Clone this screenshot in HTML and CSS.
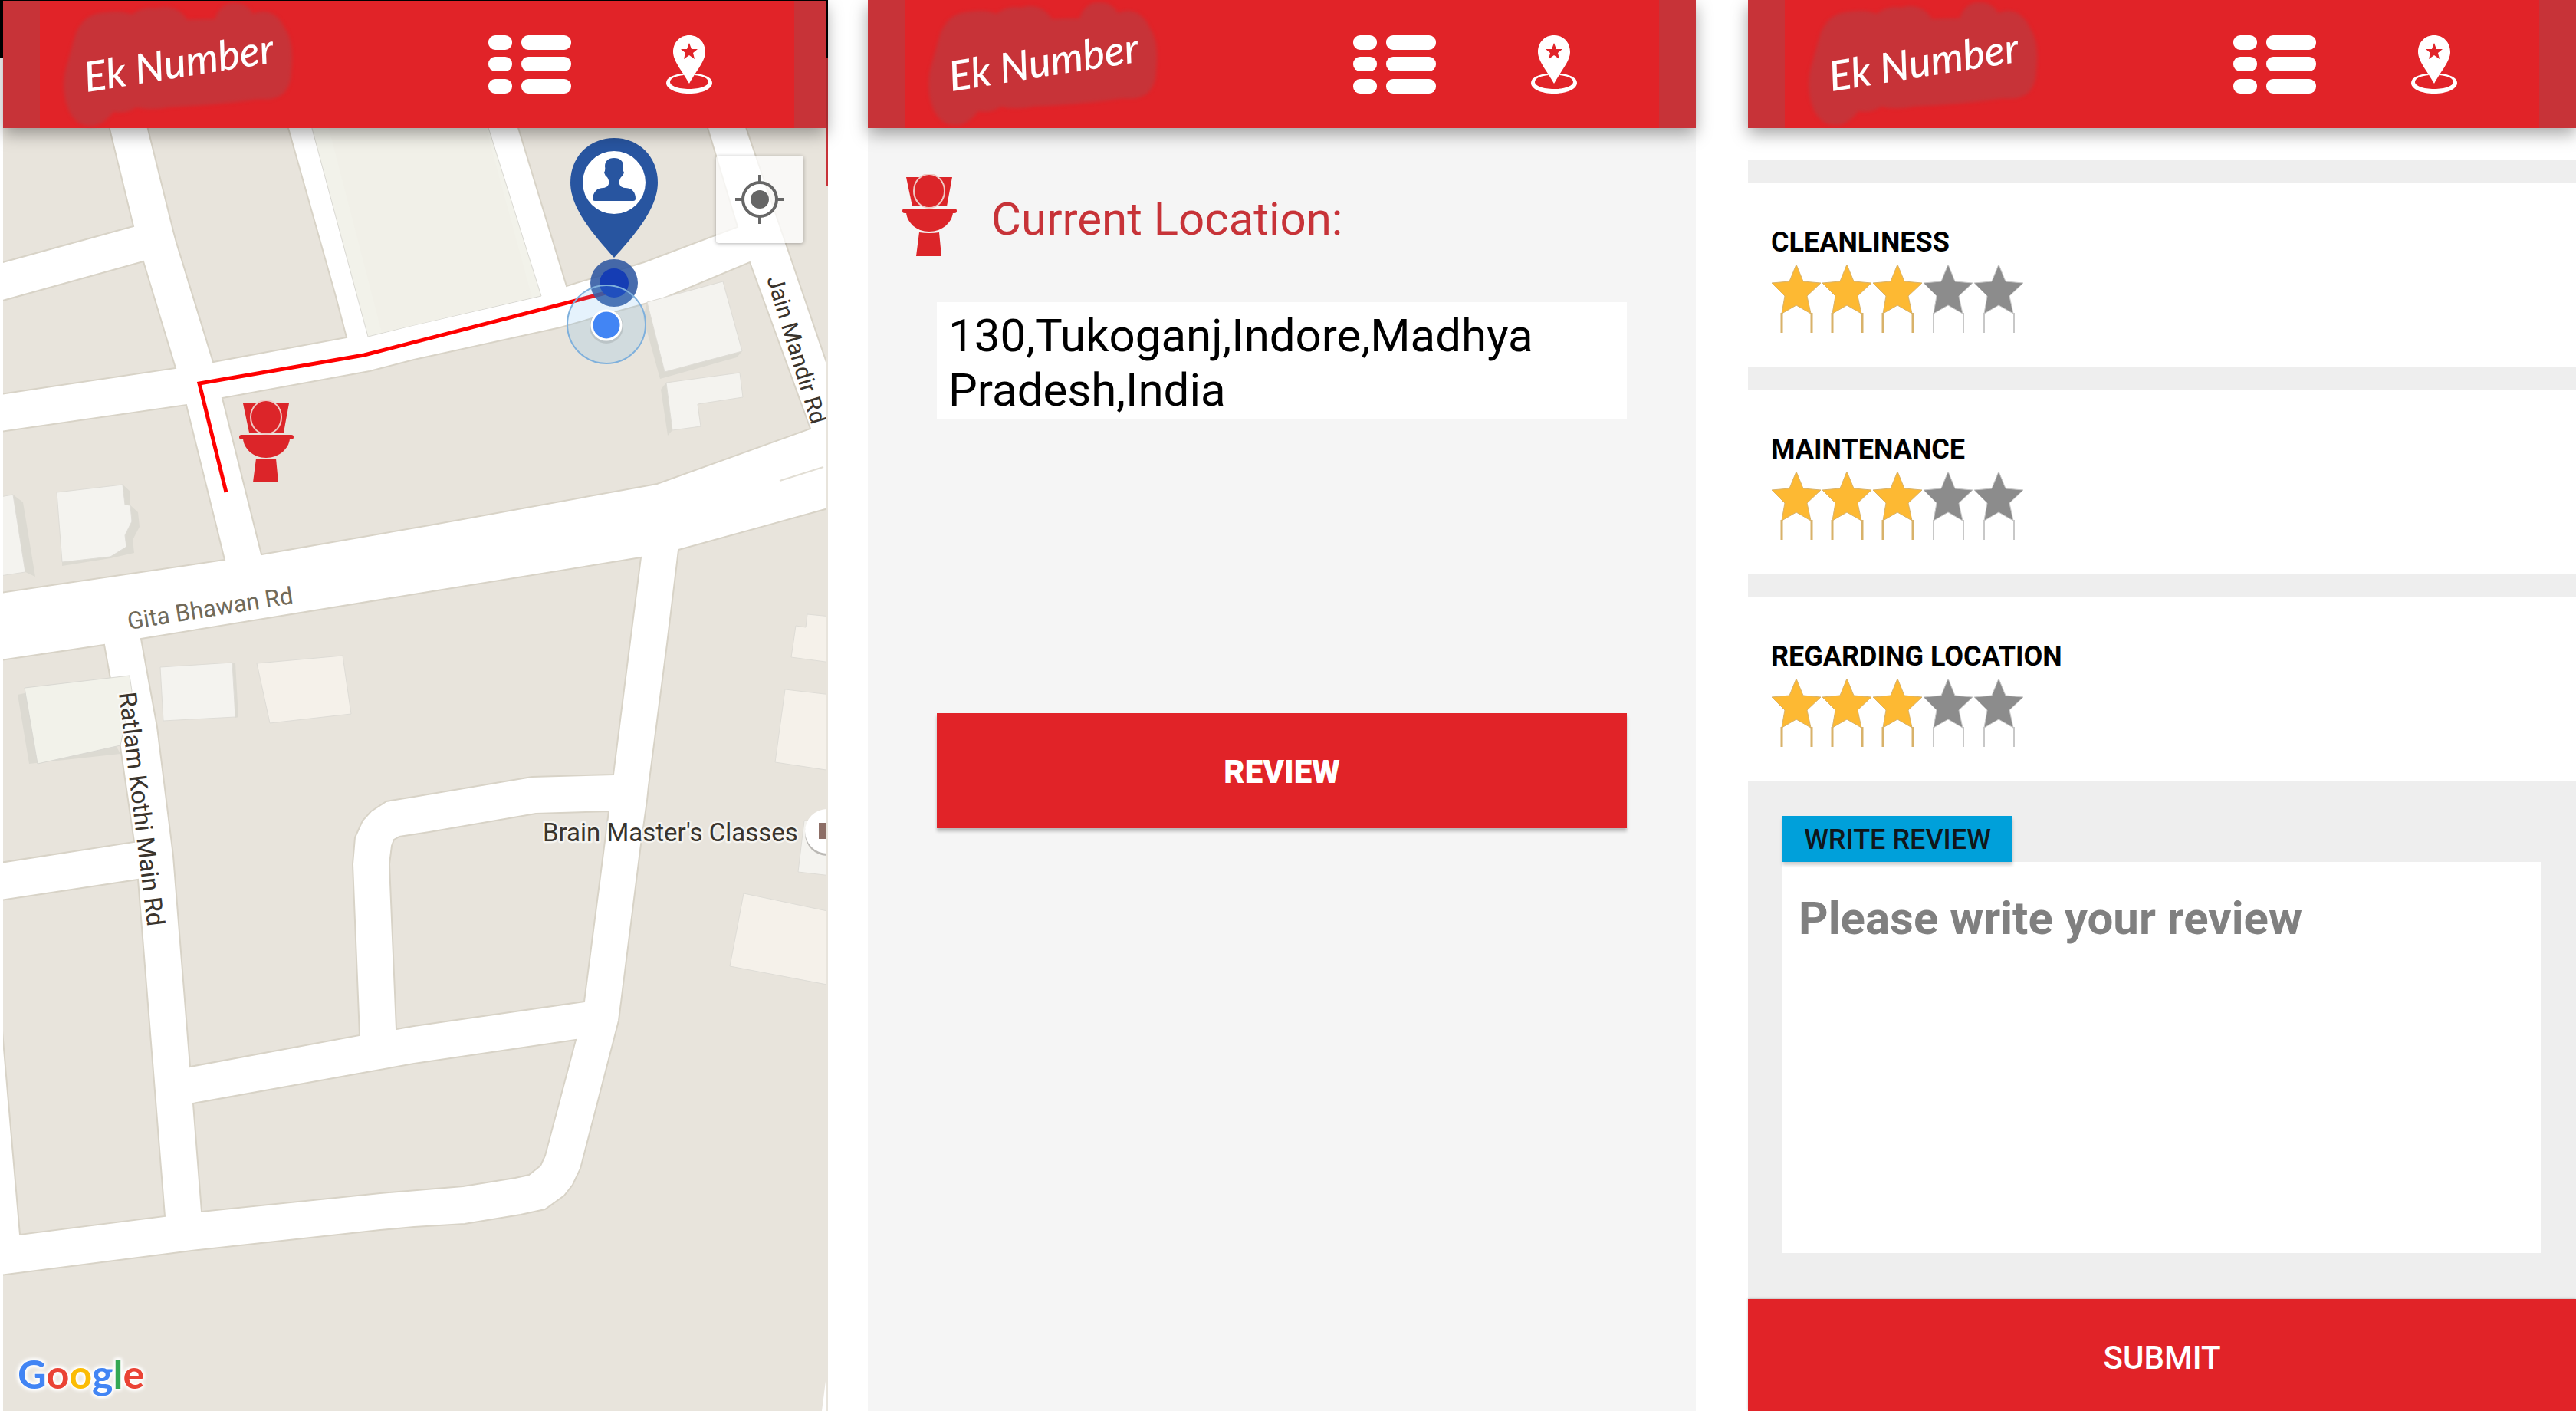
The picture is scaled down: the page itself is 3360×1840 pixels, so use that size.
FILE: index.html
```html
<!DOCTYPE html>
<html lang="en">
<head>
<meta charset="utf-8">
<meta name="viewport" content="width=device-width, initial-scale=1">
<title>Ek Number</title>
<link rel="stylesheet" href="styles.css">
</head>
<body>
<svg class="defs" aria-hidden="true">
  <symbol id="blob" viewBox="0 0 340 180">
    <path d="M38 45C45 28 55 16 78 15Q98 12 112 18C122 10 134 8 144 10C160 4 178 12 184 25Q202 24 220 24C225 8 236 2 247 3C260 3 268 12 270 17C290 8 305 20 312 37C322 50 322 75 320 92C320 110 312 124 298 127C290 130 280 128 272 129C245 133 200 137 160 139Q135 144 118 139Q105 148 88 145C80 156 68 165 56 163C40 163 30 148 27 135C22 122 22 100 26 88Z"/>
  </symbol>
  <symbol id="list" viewBox="0 0 108 76">
    <rect width="31" height="19" rx="9"/><rect x="43" width="65" height="19" rx="9"/>
    <rect y="28" width="31" height="19" rx="9"/><rect x="43" y="28" width="65" height="19" rx="9"/>
    <rect y="57" width="31" height="19" rx="9"/><rect x="43" y="57" width="65" height="19" rx="9"/>
  </symbol>
  <symbol id="pin" viewBox="0 0 60 76">
    <path fill-rule="evenodd" d="M30 0C42 0 51 9 51 22C51 34 38 48 30 63C22 48 9 34 9 22C9 9 18 0 30 0ZM30 10L27 18H19L25 23L23 31L30 26L37 31L35 23L41 18H33Z"/>
    <path d="M22 50C10 51 0 55 0 62C0 70 13 76 30 76S60 70 60 62C60 55 50 51 38 50L37 52C48 53 55 56 55 61C55 66 44 70 30 70S5 66 5 61C5 56 12 53 23 52Z"/>
  </symbol>
  <symbol id="toilet" viewBox="0 0 71 107">
    <path d="M5 4H65L58 42H13Z"/>
    <ellipse cx="35" cy="22" rx="20" ry="22" class="lid"/>
    <rect y="45" width="71" height="6" rx="3"/>
    <path d="M5 50H66C65 63 52 75 35 75S6 63 5 50Z"/>
    <path d="M22 76Q35 78 48 76L51 107H18Z"/>
  </symbol>
  <symbol id="star" viewBox="0 0 66 90">
    <path class="legs" d="M14 64V90M53 64V90"/>
    <path class="body" d="M33 1L42 23L65 25L47 42L52 65L33 54L14 65L18 42L1 25L24 23Z"/>
  </symbol>
</svg>

<main class="screens">
  <section class="screen screen-map" aria-label="Map">
    <header class="bar">
      <a class="logo" href="#"><svg class="logo-blob"><use href="#blob"/></svg><span class="logo-text">Ek Number</span></a>
      <button class="icon icon-list" aria-label="List"><svg><use href="#list"/></svg></button>
      <button class="icon icon-pin" aria-label="Nearby"><svg><use href="#pin"/></svg></button>
    </header>
    <div class="map">
      <svg class="map-art" viewBox="4 167 1074 1673" preserveAspectRatio="xMinYMin slice" role="img" aria-label="Street map with route">
        <g class="block">
          <path d="M0 160H141L174 295L0 343Z"/>
          <path d="M0 393L187 341L229 480L0 514Z"/>
          <path d="M0 563L243 528L293 730L0 773Z"/>
          <path d="M191 160L226 301L230 316L278 472L452 440L437 383L374 160Z"/>
          <path d="M674 160L739 373L840 342L962 296L921 160Z"/>
          <path d="M971 160L1084 490V160Z"/>
          <path d="M290 519L341 723L560 685L857 631L1057 559L978 342L863 390L776 414L731 427L540 469L482 484Z"/>
          <path d="M885 717L1084 662V1850H0V1663L250 1631L496 1604L540 1600L606 1596L679 1584L711 1577L736 1559L747 1545L757 1524L807 1331L836 1101L844 1044L846 1025L870 840Z"/>
          <path d="M184 833L540 775L836 727L819 860L800 1010L694 1013L540 1039L504 1045L484 1058L473 1070L463 1092L460 1127L469 1350L248 1391L226 1116L205 948Z"/>
          <path d="M0 861L136 841L144 885L175 1098L0 1125Z"/>
          <path d="M0 1174L180 1147L215 1586L26 1610L0 1310Z"/>
          <path d="M252 1439L479 1398L540 1387L751 1356L711 1507L705 1520L690 1532L672 1536L604 1547L496 1556L263 1580Z"/>
          <path d="M508 1127L511 1103L514 1095L521 1091L560 1085L699 1061L794 1058L762 1306L540 1338L517 1342Z"/>
        </g>
        <path d="M1017 627L1074 609" stroke="#e2ded4" stroke-width="2"/>
        <path d="M1078 1793L1072 1840H1084Z" fill="#fff"/>
        <path class="park" d="M405 160L480 439L540 424L706 386L635 160Z"/>
        <path d="M427 160L498 434L540 424L694 388L632 160Z" fill="#f1f0e8"/>
        <g fill="#dcdad2">
          <path d="M17 645L30 655L46 752L33 746Z"/>
          <path d="M160 632L170 641V659L180 668L182 687L173 704L175 721L144 728L81 738V730Z"/>
          <path d="M844 394L839 414L861 494L961 466L968 458L867 485Z"/>
          <path d="M869 499L862 508L871 568L877 561Z"/>
          <path d="M32 904L23 906L38 996L157 983L150 970Z"/>
          <path d="M303 864L307 865L311 935L307 936Z"/>
        </g>
        <g class="building">
          <path d="M0 648L17 645L33 746L0 751Z"/>
          <path d="M74 642L160 632L163 658L170 659L172 680L163 698L165 713L144 726L81 733Z"/>
          <path d="M844 394L943 367L968 458L867 485Z"/>
          <path d="M869 499L965 486L969 518L910 527L914 556L877 561Z"/>
          <path d="M209 870L303 864L307 935L213 940Z"/>
          <path d="M1049 1070H1084V1142L1041 1137Z"/>
        </g>
        <g class="building warm">
          <path d="M335 865L447 855L458 931L352 943Z"/>
          <path d="M1053 801L1084 804V864L1032 857L1038 816L1051 818Z"/>
          <path d="M1024 899L1084 906V1005L1011 994Z"/>
          <path d="M970 1165L1084 1189V1285L952 1260Z"/>
        </g>
        <path class="park" d="M32 897L169 881L172 901L157 972L49 996Z"/>
        <circle cx="1079" cy="1087" r="29" fill="#bbb9b5"/>
        <circle cx="1079" cy="1084" r="29" fill="#fff"/>
        <path d="M1068 1073H1084V1094H1068Z" fill="#8d6e66"/>

        <g class="street">
          <text class="major" transform="translate(168 821) rotate(-9)">Gita Bhawan Rd</text>
          <text class="minor" transform="translate(1000 363) rotate(73)">Jain Mandir Rd</text>
          <text transform="translate(155 904) rotate(83)">Ratlam Kothi Main Rd</text>
          <text class="poi" x="708" y="1097">Brain Master's Classes</text>
        </g>

        <path class="route" d="M295 642L260 500L475 463L790 382"/>
        <use href="#toilet" x="312" y="522" width="71" height="107" class="toilet"/>
        <circle cx="801" cy="369" r="31" fill="#2a549f" opacity=".86"/>
        <circle cx="801" cy="369" r="19" fill="#153db4"/>
        <circle cx="791" cy="423" r="51" fill="#5fb0ea" fill-opacity=".16" stroke="#7fb0dc" stroke-width="2"/>
        <circle cx="791" cy="426" r="22" fill="#000" opacity=".1"/>
        <circle cx="791" cy="424" r="19" fill="#4285f4" stroke="#fff" stroke-width="3"/>
        <path d="M801 180C833 180 858 204 858 238C858 272 827 307 801 336C775 307 744 272 744 238C744 204 769 180 801 180Z" fill="#2855a0"/>
        <circle cx="801" cy="238" r="41" fill="#fff"/>
        <path d="M801 206C809 206 813 210 813 217Q812 222 814 225Q813 229 810 231C806 237 807 244 815 245C824 245 829 250 829 259Q829 262 826 262H776Q773 262 773 259C774 250 779 245 787 245C795 244 796 237 792 231Q789 229 788 225Q790 222 789 217C789 210 793 206 801 206Z" fill="#2855a0"/>

        <text class="google" x="23" y="1811"><tspan fill="#4285f4">G</tspan><tspan fill="#ea4335">o</tspan><tspan fill="#fbbc05">o</tspan><tspan fill="#4285f4">g</tspan><tspan fill="#34a853">l</tspan><tspan fill="#ea4335">e</tspan></text>
      </svg>
      <button class="locate" aria-label="My location">
        <svg viewBox="0 0 64 64"><circle cx="32" cy="32" r="22"/><circle class="dot" cx="32" cy="32" r="12"/><path d="M32 0V10M32 54V64M0 32H10M54 32H64"/></svg>
      </button>
    </div>
  </section>

  <section class="screen screen-location" aria-label="Current location">
    <header class="bar">
      <a class="logo" href="#"><svg class="logo-blob"><use href="#blob"/></svg><span class="logo-text">Ek Number</span></a>
      <button class="icon icon-list" aria-label="List"><svg><use href="#list"/></svg></button>
      <button class="icon icon-pin" aria-label="Nearby"><svg><use href="#pin"/></svg></button>
    </header>
    <h1 class="place-title"><svg class="toilet"><use href="#toilet"/></svg><span>Current Location:</span></h1>
    <p class="address">130,Tukoganj,Indore,Madhya Pradesh,India</p>
    <button class="review-button">REVIEW</button>
  </section>

  <form class="screen screen-review" aria-label="Review">
    <header class="bar">
      <a class="logo" href="#"><svg class="logo-blob"><use href="#blob"/></svg><span class="logo-text">Ek Number</span></a>
      <button type="button" class="icon icon-list" aria-label="List"><svg><use href="#list"/></svg></button>
      <button type="button" class="icon icon-pin" aria-label="Nearby"><svg><use href="#pin"/></svg></button>
    </header>
    <div class="ratings">
      <div class="spacer"></div>
      <section class="rating" role="radiogroup" aria-labelledby="r1">
        <h2 id="r1">CLEANLINESS</h2>
        <div class="stars">
          <label class="star"><input type="radio" name="clean" aria-label="1 star"><svg><use href="#star"/></svg></label>
          <label class="star"><input type="radio" name="clean" aria-label="2 stars"><svg><use href="#star"/></svg></label>
          <label class="star"><input type="radio" name="clean" aria-label="3 stars" checked><svg><use href="#star"/></svg></label>
          <label class="star"><input type="radio" name="clean" aria-label="4 stars"><svg><use href="#star"/></svg></label>
          <label class="star"><input type="radio" name="clean" aria-label="5 stars"><svg><use href="#star"/></svg></label>
        </div>
      </section>
      <section class="rating" role="radiogroup" aria-labelledby="r2">
        <h2 id="r2">MAINTENANCE</h2>
        <div class="stars">
          <label class="star"><input type="radio" name="maint" aria-label="1 star"><svg><use href="#star"/></svg></label>
          <label class="star"><input type="radio" name="maint" aria-label="2 stars"><svg><use href="#star"/></svg></label>
          <label class="star"><input type="radio" name="maint" aria-label="3 stars" checked><svg><use href="#star"/></svg></label>
          <label class="star"><input type="radio" name="maint" aria-label="4 stars"><svg><use href="#star"/></svg></label>
          <label class="star"><input type="radio" name="maint" aria-label="5 stars"><svg><use href="#star"/></svg></label>
        </div>
      </section>
      <section class="rating" role="radiogroup" aria-labelledby="r3">
        <h2 id="r3">REGARDING LOCATION</h2>
        <div class="stars">
          <label class="star"><input type="radio" name="loc" aria-label="1 star"><svg><use href="#star"/></svg></label>
          <label class="star"><input type="radio" name="loc" aria-label="2 stars"><svg><use href="#star"/></svg></label>
          <label class="star"><input type="radio" name="loc" aria-label="3 stars" checked><svg><use href="#star"/></svg></label>
          <label class="star"><input type="radio" name="loc" aria-label="4 stars"><svg><use href="#star"/></svg></label>
          <label class="star"><input type="radio" name="loc" aria-label="5 stars"><svg><use href="#star"/></svg></label>
        </div>
      </section>
    </div>
    <div class="write">
      <button type="button" class="write-button">WRITE REVIEW</button>
      <textarea aria-label="Review text" placeholder="Please write your review"></textarea>
    </div>
    <button type="submit" class="submit">SUBMIT</button>
  </form>
</main>
</body>
</html>
```
FILE: styles.css
```css
* { box-sizing: border-box; }

:root {
  --red: #e12328;
  --brick: #c73338;
  --panel: #eeeeee;
}

body {
  margin: 0;
  background: #fff;
  font-family: Roboto, "Liberation Sans", sans-serif;
  color: #000;
}

button { border: 0; padding: 0; font-family: inherit; cursor: pointer; }
h1, h2, p { margin: 0; }
.defs { position: absolute; width: 0; height: 0; }

.screens {
  display: grid;
  grid-template-columns: repeat(3, minmax(0, 1fr));
  column-gap: 60px;
  min-height: 100vh;
}
.screen { display: flex; flex-direction: column; min-width: 0; }
.screen-location { margin: 0 8px 0 -8px; }

/* Top bar */
.bar {
  position: relative;
  z-index: 1;
  display: flex;
  align-items: center;
  flex: none;
  height: 167px;
  padding-left: 8px;
  background: var(--red);
  border: solid var(--brick);
  border-width: 0 48px;
  box-shadow: 0 8px 20px rgba(0, 0, 0, .35);
}
.logo { position: relative; flex: none; width: 340px; height: 167px; overflow: hidden; }
.logo-blob { display: block; width: 340px; height: 180px; fill: var(--brick); filter: blur(2px); }
.logo-text {
  position: absolute;
  left: 48px;
  top: 48px;
  transform: rotate(-9deg);
  color: #fff;
  font: italic 500 54px/64px Lato, sans-serif;
  white-space: nowrap;
}
.icon { flex: none; background: none; height: 76px; }
.icon svg { display: block; width: 100%; height: 100%; fill: #fff; }
.icon-list { width: 108px; margin-left: 237px; }
.icon-pin { width: 60px; margin-left: 124px; }

.toilet { fill: #dc2529; }
.lid { stroke: #efc9c4; stroke-width: 2px; }

/* Map screen, with the edge of the screen behind it showing */
.screen-map {
  padding: 1px 2px 0 4px;
  background:
    linear-gradient(#000, #000) top / 100% 1px no-repeat,
    linear-gradient(#000 75px, #fff 75px) left / 4px 100% no-repeat,
    linear-gradient(#000 75px, var(--brick) 75px 243px, #e8e4dc 243px) right / 2px 100% no-repeat;
}
.screen-map .bar { height: 166px; border-right-width: 42px; }
.map { position: relative; display: flex; flex: 1; min-height: 0; }
.map-art { display: block; flex: 1; width: 100%; min-height: 0; background: #fff; }
.block path { fill: #e8e4dc; stroke: #d8d3c7; stroke-width: 2px; }
.park { fill: #f2f2ea; stroke: #d9d8d2; stroke-width: 1px; }
.building path { fill: #f4f3ef; stroke: #dedcd6; stroke-width: 1px; }
.building.warm path { fill: #f5f1ea; }
.street text {
  font-size: 32px;
  fill: #3a342d;
  stroke: #fff;
  stroke-opacity: .6;
  stroke-width: 5px;
  stroke-linejoin: round;
  paint-order: stroke;
}
.street .major { fill: #716a59; font-size: 31px; }
.street .minor { font-size: 30px; }
.street .poi { font-size: 33px; }
.route { fill: none; stroke: #f00; stroke-width: 5px; }
.google {
  font: 700 52px Lato, sans-serif;
  filter: drop-shadow(0 0 2px #fff) drop-shadow(0 0 2px #fff) drop-shadow(0 0 2px #fff);
}
.locate {
  position: absolute;
  top: 36px;
  right: 30px;
  display: flex;
  align-items: center;
  justify-content: center;
  width: 114px;
  height: 114px;
  border-radius: 4px;
  background: rgba(255, 255, 255, .75);
  box-shadow: 0 1px 5px rgba(0, 0, 0, .3);
}
.locate svg { width: 64px; height: 64px; fill: none; stroke: #666; stroke-width: 4px; }
.locate .dot { fill: #666; stroke: none; }

/* Current location screen */
.screen-location { background: #f5f5f5; }
.place-title {
  display: flex;
  align-items: center;
  gap: 45px;
  margin: 60px 45px 0;
  font-size: 60px;
  line-height: 71px;
  font-weight: 400;
  color: var(--brick);
}
.place-title svg { flex: none; width: 71px; height: 107px; }
.place-title span { padding-top: 10px; }
.address {
  margin: 60px 90px 0;
  padding: 8px 15px 2px;
  background: #fff;
  font-size: 60px;
  line-height: 71px;
}
.review-button {
  height: 150px;
  margin: 384px 90px 0;
  padding-top: 2px;
  background: var(--red);
  color: #fff;
  font-size: 42px;
  font-weight: 900;
  box-shadow: 0 4px 4px rgba(0, 0, 0, .25);
}

/* Review screen */
.screen-review { background: var(--panel); }
.ratings { display: flex; flex-direction: column; gap: 30px; }
.spacer { height: 42px; background: #fff; }
.rating { height: 240px; padding: 56px 30px 0; background: #fff; }
.rating h2 { font-size: 36px; line-height: 42px; font-weight: 700; }
.stars { display: flex; margin-top: 7px; }
.star { position: relative; width: 66px; height: 90px; }
.star svg { display: block; width: 66px; height: 90px; }
.star input { position: absolute; inset: 0; width: 100%; height: 100%; margin: 0; opacity: 0; }
.star { --fill: #fdb933; --edge: #d8b26a; --leg: 3px; }
.star:has(:checked) ~ .star { --fill: #8c8c8c; --edge: #c8c8c8; --leg: 2px; }
.body { fill: var(--fill); stroke: var(--edge); stroke-width: 1px; }
.legs { fill: none; stroke: var(--edge); stroke-width: var(--leg); }

.write { display: flex; flex: 1; flex-direction: column; align-items: flex-start; padding: 45px 45px 60px; }
.write-button {
  position: relative;
  width: 300px;
  height: 60px;
  padding-top: 2px;
  background: #00a0da;
  color: #10171b;
  font-size: 36px;
  font-weight: 500;
  box-shadow: 0 4px 4px rgba(0, 0, 0, .2);
}
.write textarea {
  flex: 1;
  width: 100%;
  min-height: 300px;
  padding: 38px 21px;
  border: 0;
  resize: none;
  background: #fff;
  font: 700 60px/71px Roboto, sans-serif;
}
.write textarea::placeholder { color: #808080; opacity: 1; }
.submit {
  height: 146px;
  padding-top: 6px;
  background: var(--red);
  color: #fff;
  font-size: 42px;
  font-weight: 500;
  box-shadow: 0 -1px 3px rgba(0, 0, 0, .2);
}
```
